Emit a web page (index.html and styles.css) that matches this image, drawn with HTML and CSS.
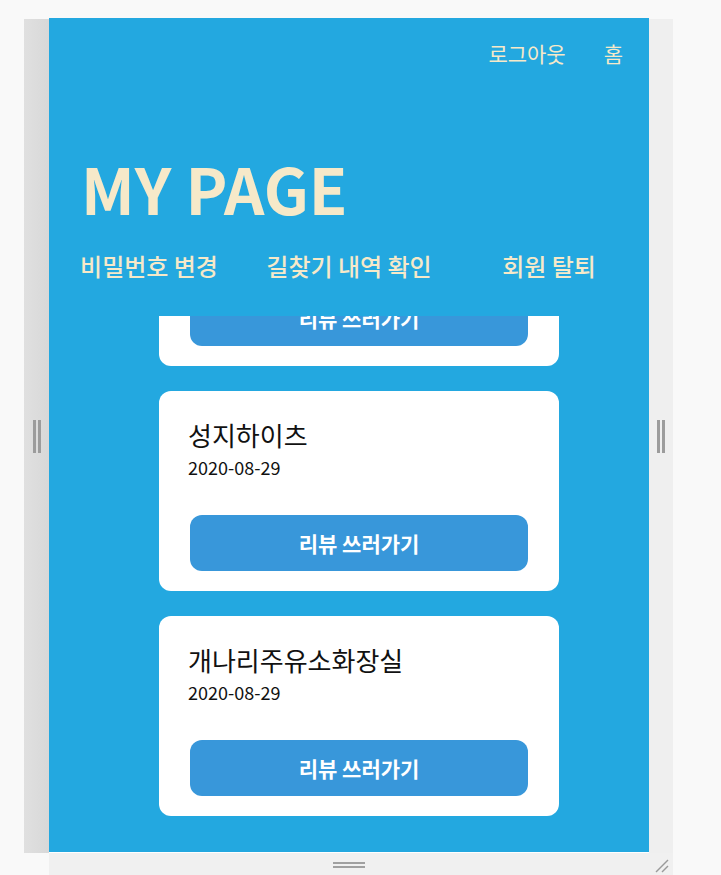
FILE: index.html
```html
<!DOCTYPE html>
<html>
<head>
    <title>MY PAGE</title>
    <link rel="stylesheet" href="styles.css">
</head>
<body>
    <div class="emu">
        <!-- 왼쪽 손잡이 -->
        <div class="edge edge-left">
            <div class="grip-v"><span></span><span></span></div>
        </div>

        <div class="device">
            <div class="header">
                <div class="topbar">
                    <a href="#">로그아웃</a>
                    <a href="#">홈</a>
                </div>
                <h1>MY PAGE</h1>
                <div class="menu">
                    <a href="#">비밀번호 변경</a>
                    <a href="#">길찾기 내역 확인</a>
                    <a href="#">회원 탈퇴</a>
                </div>
            </div>

            <!-- 길찾기 내역 목록 (스크롤된 상태) -->
            <div class="scroll">
                <div class="list">
                    <div class="card">
                        <button class="review-btn">리뷰 쓰러가기</button>
                    </div>
                    <div class="card">
                        <div class="place">성지하이츠</div>
                        <div class="date">2020-08-29</div>
                        <button class="review-btn">리뷰 쓰러가기</button>
                    </div>
                    <div class="card">
                        <div class="place">개나리주유소화장실</div>
                        <div class="date">2020-08-29</div>
                        <button class="review-btn">리뷰 쓰러가기</button>
                    </div>
                </div>
            </div>
        </div>

        <!-- 오른쪽 손잡이 -->
        <div class="edge edge-right">
            <div class="grip-v"><span></span><span></span></div>
        </div>

        <div class="edge edge-bottom">
            <div class="grip-h"><span></span><span></span></div>
        </div>
        <div class="edge edge-corner">
            <svg width="16" height="16" viewBox="0 0 16 16">
                <line x1="3" y1="15" x2="15" y2="3" stroke="#9a9a9a" stroke-width="1.5"/>
                <line x1="9" y1="15" x2="15" y2="9" stroke="#9a9a9a" stroke-width="1.5"/>
            </svg>
        </div>
    </div>
</body>
</html>
```

FILE: styles.css
```css
html, body {
    margin: 0;
    height: 100%;
    overflow: hidden;
}
body {
    background: #f9f9f9;
    font-family: "Noto Sans CJK KR", "Noto Sans", sans-serif;
}

/* 반응형 모드 틀 */
.emu {
    display: grid;
    grid-template-columns: 25px 600px 24px;
    grid-template-rows: 835px 22px;
    margin: 18px 0 0 24px;
}
.edge {
    display: flex;
    align-items: center;
    justify-content: center;
}
.edge-left {
    margin-top: 1px;
    background: linear-gradient(to right, #e0e0e0, #d8d8d8);
}
.edge-right {
    margin-top: 1px;
    background: #efefef;
}
.edge-bottom {
    grid-column: 2;
    background: #f0f0f0;
}
.edge-corner {
    grid-column: 3;
    background: #f0f0f0;
    justify-content: flex-end;
    align-items: flex-end;
    padding: 0 4px 2px 0;
}
.grip-v {
    display: flex;
    gap: 2px;
}
.grip-v span {
    width: 3px;
    height: 33px;
    background: #9c9c9c;
}
.grip-h {
    display: flex;
    flex-direction: column;
    gap: 2px;
    margin-top: 2px;
}
.grip-h span {
    width: 32px;
    height: 2px;
    background: #a0a0a0;
}

/* 화면 */
.device {
    display: flex;
    flex-direction: column;
    overflow: hidden;
    background: #23a8e0;
    border-bottom: 1px solid #ffffff;
}
.header {
    flex: none;
    height: 298px;
    overflow: hidden;
}
.header a {
    color: #f6e9c9;
    text-decoration: none;
}
.topbar {
    display: flex;
    justify-content: flex-end;
    gap: 38px;
    padding: 20px 26px 0 0;
    font-size: 21px;
    line-height: 30px;
}
h1 {
    margin: 88px 0 0 32px;
    font-size: 63px;
    line-height: 64px;
    font-weight: 700;
    color: #f6e9c9;
}
.menu {
    display: flex;
    margin-top: 31px;
    font-size: 24px;
    line-height: 30px;
    font-weight: 500;
}
.menu a {
    flex: 1;
    text-align: center;
}

.scroll {
    flex: 1;
    overflow: hidden;
}
.list {
    display: flex;
    flex-direction: column;
    align-items: center;
    gap: 25px;
    margin-top: -150px;
    padding: 0 0 36px 20px;
}
.card {
    display: flex;
    flex-direction: column;
    width: 400px;
    min-height: 200px;
    box-sizing: border-box;
    padding: 26px 29px 20px;
    background: #ffffff;
    border-radius: 12px;
}
.place {
    font-size: 26px;
    line-height: 36px;
    color: #111;
}
.date {
    margin-top: 1px;
    font-size: 18px;
    line-height: 26px;
    color: #111;
}
.review-btn {
    display: block;
    width: 338px;
    height: 56px;
    margin: auto 0 0 2px;
    border: none;
    border-radius: 12px;
    background: #3897da;
    color: #ffffff;
    font-family: inherit;
    font-size: 21px;
    font-weight: 700;
}
```
